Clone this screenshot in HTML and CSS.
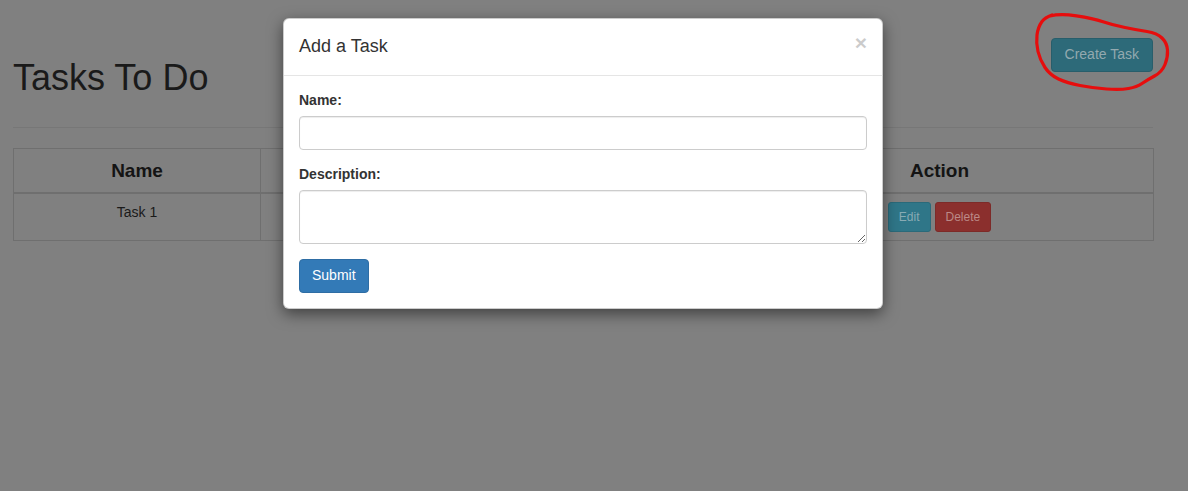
FILE: index.html
```html
<!DOCTYPE html>
<html lang="en">
<head>
<meta charset="utf-8">
<title>Tasks To Do</title>
<link rel="stylesheet" href="styles.css">
</head>
<body>
  <div class="container">
    <div class="page-header">
      <h1 class="page-title">Tasks To Do</h1>
      <button class="btn btn-create" type="button">Create Task</button>
    </div>
    <table class="tasks">
      <colgroup>
        <col class="col-name">
        <col class="col-desc">
        <col class="col-action">
      </colgroup>
      <thead>
        <tr><th>Name</th><th>Description</th><th>Action</th></tr>
      </thead>
      <tbody>
        <tr>
          <td>Task 1</td>
          <td></td>
          <td>
            <div class="actions">
              <button class="btn btn-sm btn-edit" type="button">Edit</button>
              <button class="btn btn-sm btn-delete" type="button">Delete</button>
            </div>
          </td>
        </tr>
      </tbody>
    </table>
  </div>

  <svg class="scribble" width="145" height="95" viewBox="0 0 145 95" aria-hidden="true">
    <path d="M20 11 Q30 8.3 46.5 10.8 Q63 13.3 73 16.65 Q83 20 95 22.5 Q107 25 117 26.5 Q127 28 132 33 Q137 38 137.5 45 Q138 52 135 59.5 Q132 67 124.5 71 Q117 75 112 78.5 Q107 82 98.5 83.5 Q90 85 76.5 84 Q63 83 50 80.5 Q37 78 28.5 74 Q20 70 15 62.5 Q10 55 8 46.5 Q6 38 7 30 Q8 22 12 16.5 Q15 12.5 22 10" fill="none" stroke="#e60d0d" stroke-width="3.2" stroke-linecap="round" stroke-linejoin="round"/>
  </svg>

  <div class="modal">
    <div class="modal-content">
      <div class="modal-header">
        <h4 class="modal-title">Add a Task</h4>
        <button class="close" type="button">&times;</button>
      </div>
      <div class="modal-body">
        <form>
          <div class="form-group">
            <label for="name">Name:</label>
            <input id="name" class="form-control" type="text">
          </div>
          <div class="form-group">
            <label for="desc">Description:</label>
            <textarea id="desc" class="form-control" rows="2"></textarea>
          </div>
          <button class="btn btn-primary" type="button">Submit</button>
        </form>
      </div>
    </div>
  </div>
</body>
</html>
```

FILE: styles.css
```css
* { box-sizing: border-box; }

body {
  margin: 0;
  background: #808080;
  font-family: "Liberation Sans", Arial, sans-serif;
  font-size: 14px;
  line-height: 1.42857;
  color: #1a1a1a;
}

.container {
  width: 1140px;
  margin-left: 13px;
}

.page-header {
  display: flex;
  justify-content: space-between;
  align-items: flex-start;
  padding-top: 38px;
  padding-bottom: 29px;
  border-bottom: 1px solid #777777;
  margin-bottom: 20px;
}

.page-title {
  margin: 20px 0 0;
  font-size: 36px;
  font-weight: 500;
  line-height: 1.1;
  color: #1a1a1a;
}

.btn {
  display: inline-block;
  font-family: inherit;
  font-size: 14px;
  line-height: 1.42857;
  padding: 6px 12px;
  border: 1px solid transparent;
  border-radius: 4px;
  cursor: pointer;
}

.btn-create {
  background: #2d6a79;
  border-color: #285e6b;
  color: #93a9af;
  padding-left: 13px;
  padding-right: 13px;
}

.btn-sm {
  padding: 5px 10px;
  font-size: 12px;
  line-height: 1.5;
  border-radius: 3px;
}

.btn-edit {
  background: #2f7688;
  border-color: #2a6a7a;
  color: #88abb4;
}

.btn-delete {
  background: #8b2f2d;
  border-color: #7d2a28;
  color: #bb8987;
}

.btn-primary {
  background: #337ab7;
  border-color: #2e6da4;
  color: #ffffff;
}

.tasks {
  width: 1140px;
  table-layout: fixed;
  border-collapse: collapse;
  border: 1px solid #6f6f6f;
}

.col-name { width: 247px; }
.col-desc { width: 465px; }
.col-action { width: 428px; }

.tasks th,
.tasks td {
  border: 1px solid #6f6f6f;
  padding: 8px;
  text-align: center;
  vertical-align: top;
}

.tasks th {
  font-size: 19px;
  font-weight: bold;
  line-height: 27.5px;
  color: #141414;
  border-bottom-width: 2px;
}

.tasks td {
  line-height: 20px;
  color: #1a1a1a;
}

.actions {
  display: flex;
  justify-content: center;
  gap: 4px;
}

.scribble {
  position: absolute;
  left: 1030px;
  top: 5px;
}

.modal {
  position: absolute;
  left: 283px;
  top: 18px;
  width: 600px;
}

.modal-content {
  background: #ffffff;
  border: 1px solid rgba(0, 0, 0, 0.2);
  border-radius: 6px;
  box-shadow: 0 5px 15px rgba(0, 0, 0, 0.5);
  color: #333333;
}

.modal-header {
  display: flex;
  justify-content: space-between;
  align-items: flex-start;
  padding: 15px;
  border-bottom: 1px solid #e5e5e5;
}

.modal-title {
  margin: 0;
  font-size: 18px;
  font-weight: 500;
  line-height: 1.42857;
}

.close {
  margin-top: -2px;
  padding: 0;
  background: none;
  border: 0;
  font-family: inherit;
  font-size: 21px;
  font-weight: bold;
  line-height: 1;
  color: #000000;
  opacity: 0.2;
}

.modal-body {
  padding: 15px;
}

.form-group {
  margin-bottom: 15px;
}

.form-group label {
  display: block;
  margin-bottom: 5px;
  font-weight: bold;
}

.form-control {
  display: block;
  width: 100%;
  height: 34px;
  padding: 6px 12px;
  font-family: inherit;
  font-size: 14px;
  line-height: 1.42857;
  color: #555555;
  background: #ffffff;
  border: 1px solid #cccccc;
  border-radius: 4px;
  box-shadow: inset 0 1px 1px rgba(0, 0, 0, 0.075);
}

textarea.form-control {
  height: 54px;
  resize: vertical;
}
```
